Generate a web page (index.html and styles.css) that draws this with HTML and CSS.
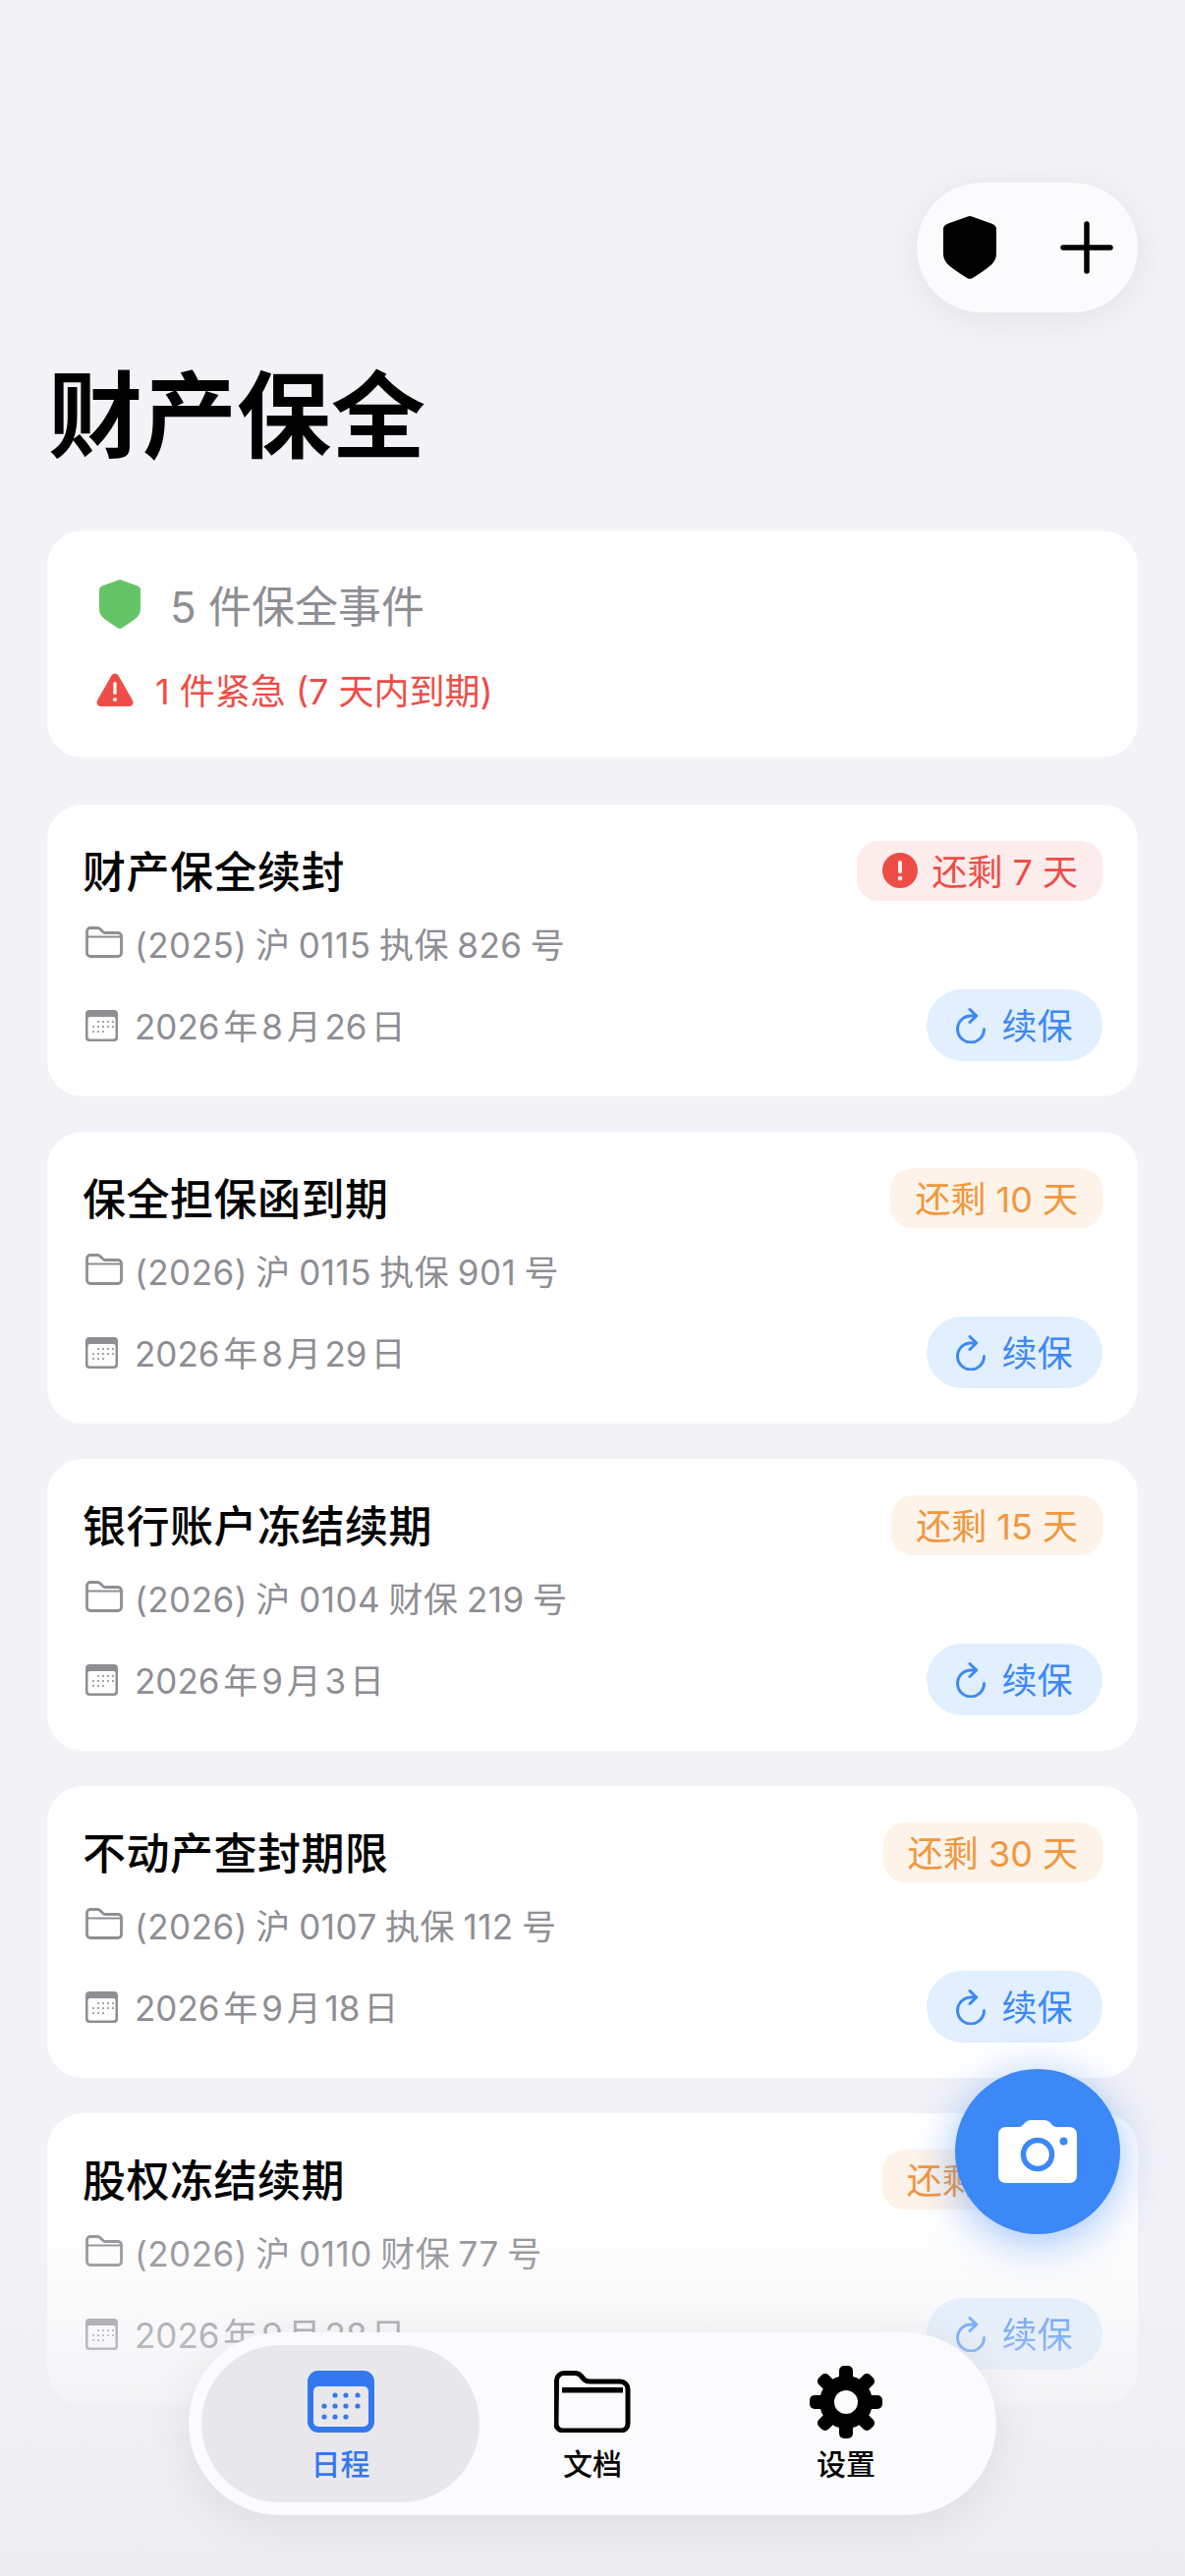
FILE: index.html
```html
<!DOCTYPE html>
<html lang="zh-CN">
<head>
  <meta charset="UTF-8" />
  <title>财产保全</title>
  <link rel="stylesheet" href="styles.css">
</head>
<body>

  <!-- 图标 -->
  <svg class="defs" width="0" height="0">
    <symbol id="shield" viewBox="0 0 54 64">
      <path fill="currentColor" d="M27 0 C28 0 29 .4 30 .8 L49 7.6 C52 8.8 54 10.400 54 13 V38 C54 45 50 49 44 53.500 C39 57 34 60.500 29 63.400 C28 64 26 64 25 63.400 C20 60.500 15 57 10 53.500 C4 49 0 45 0 38 V13 C0 10.400 2 8.800 5 7.600 L24 .8 C25 .4 26 0 27 0 Z"/>
    </symbol>
    <symbol id="folder" viewBox="0 0 38 32">
      <path fill="none" stroke="currentColor" stroke-width="2.800" stroke-linejoin="round" d="M1.500 5 a3.500 3.500 0 0 1 3.500-3.500 h7 c1.500 0 2.300.5 3.300 1.500 l2.200 2.200 c.8.8 1.500 1.300 2.800 1.300 h12.700 a3.500 3.500 0 0 1 3.500 3.500 v17 a3.500 3.500 0 0 1-3.500 3.500 h-28 a3.500 3.500 0 0 1-3.500-3.500 Z"/>
      <path fill="none" stroke="currentColor" stroke-width="2" d="M2 10.500 H36"/>
    </symbol>
    <symbol id="cal-sm" viewBox="0 0 33 32">
      <rect width="33" height="32" rx="4" fill="currentColor"/>
      <rect x="2.500" y="7" width="28" height="22.500" rx="2" fill="#fff"/>
      <g fill="currentColor">
        <circle cx="13" cy="12" r="1.100"/><circle cx="18" cy="12" r="1.100"/><circle cx="23" cy="12" r="1.100"/><circle cx="28" cy="12" r="1.100"/>
        <circle cx="8" cy="17" r="1.100"/><circle cx="13" cy="17" r="1.100"/><circle cx="18" cy="17" r="1.100"/><circle cx="23" cy="17" r="1.100"/><circle cx="28" cy="17" r="1.100"/>
        <circle cx="8" cy="22" r="1.100"/><circle cx="13" cy="22" r="1.100"/><circle cx="18" cy="22" r="1.100"/>
      </g>
    </symbol>
    <symbol id="renew" viewBox="0 0 30 36">
      <path fill="none" stroke="currentColor" stroke-width="3" stroke-linecap="round" stroke-linejoin="round" d="M20.500 8 H15 A13.500 13.500 0 1 0 28.500 21.500 M14 1.500 L20.800 8 L14 14.500"/>
    </symbol>
  </svg>

  <div class="page">
    <div class="top-actions">
      <button class="pill-btn"><svg class="ic-shield"><use href="#shield"/></svg></button>
      <button class="pill-btn">
        <svg class="ic-plus" viewBox="0 0 54 54"><path d="M27 3 V51 M3 27 H51" stroke="currentColor" stroke-width="5.500" stroke-linecap="round"/></svg>
      </button>
    </div>

    <h1 class="title">财产保全</h1>

    <!-- 汇总 -->
    <section class="summary">
      <div class="summary-main">
        <svg class="ic-shield-green"><use href="#shield"/></svg>
        <span>5 件保全事件</span>
      </div>
      <div class="summary-warn">
        <svg class="ic-warn" viewBox="0 0 38 34">
          <path fill="currentColor" d="M15.500 2.500 C17 -.300 21 -.300 22.500 2.500 L37 28 C38.500 31 36.500 34 33.500 34 H4.500 C1.500 34 -.500 31 1 28 Z"/>
          <rect x="17.400" y="9" width="3.200" height="13" rx="1.600" fill="#fff"/>
          <circle cx="19" cy="27" r="2" fill="#fff"/>
        </svg>
        <span>1 件紧急 (7 天内到期)</span>
      </div>
    </section>

    <!-- 事件列表 -->
    <section class="event">
      <div class="event-head">
        <h2>财产保全续封</h2>
        <span class="badge badge-red">
          <svg class="ic-alert" viewBox="0 0 36 36"><circle cx="18" cy="18" r="18" fill="currentColor"/><rect x="16" y="8" width="4" height="13" rx="2" fill="#fdeded"/><circle cx="18" cy="26" r="2.300" fill="#fdeded"/></svg>
          <span>还剩 7 天</span>
        </span>
      </div>
      <div class="event-case"><svg class="ic-folder"><use href="#folder"/></svg><span>(2025) 沪 0115 执保 826 号</span></div>
      <div class="event-foot">
        <div class="event-date"><svg class="ic-cal"><use href="#cal-sm"/></svg><span>2026 年 8 月 26 日</span></div>
        <button class="renew"><svg class="ic-renew"><use href="#renew"/></svg><span>续保</span></button>
      </div>
    </section>

    <section class="event">
      <div class="event-head">
        <h2>保全担保函到期</h2>
        <span class="badge badge-orange"><span>还剩 10 天</span></span>
      </div>
      <div class="event-case"><svg class="ic-folder"><use href="#folder"/></svg><span>(2026) 沪 0115 执保 901 号</span></div>
      <div class="event-foot">
        <div class="event-date"><svg class="ic-cal"><use href="#cal-sm"/></svg><span>2026 年 8 月 29 日</span></div>
        <button class="renew"><svg class="ic-renew"><use href="#renew"/></svg><span>续保</span></button>
      </div>
    </section>

    <section class="event">
      <div class="event-head">
        <h2>银行账户冻结续期</h2>
        <span class="badge badge-orange"><span>还剩 15 天</span></span>
      </div>
      <div class="event-case"><svg class="ic-folder"><use href="#folder"/></svg><span>(2026) 沪 0104 财保 219 号</span></div>
      <div class="event-foot">
        <div class="event-date"><svg class="ic-cal"><use href="#cal-sm"/></svg><span>2026 年 9 月 3 日</span></div>
        <button class="renew"><svg class="ic-renew"><use href="#renew"/></svg><span>续保</span></button>
      </div>
    </section>

    <section class="event">
      <div class="event-head">
        <h2>不动产查封期限</h2>
        <span class="badge badge-orange"><span>还剩 30 天</span></span>
      </div>
      <div class="event-case"><svg class="ic-folder"><use href="#folder"/></svg><span>(2026) 沪 0107 执保 112 号</span></div>
      <div class="event-foot">
        <div class="event-date"><svg class="ic-cal"><use href="#cal-sm"/></svg><span>2026 年 9 月 18 日</span></div>
        <button class="renew"><svg class="ic-renew"><use href="#renew"/></svg><span>续保</span></button>
      </div>
    </section>

    <section class="event">
      <div class="event-head">
        <h2>股权冻结续期</h2>
        <span class="badge badge-orange"><span>还剩 40 天</span></span>
      </div>
      <div class="event-case"><svg class="ic-folder"><use href="#folder"/></svg><span>(2026) 沪 0110 财保 77 号</span></div>
      <div class="event-foot">
        <div class="event-date"><svg class="ic-cal"><use href="#cal-sm"/></svg><span>2026 年 9 月 28 日</span></div>
        <button class="renew"><svg class="ic-renew"><use href="#renew"/></svg><span>续保</span></button>
      </div>
    </section>
  </div>

  <!-- 底部渐隐 -->
  <div class="fade"></div>

  <!-- 拍照按钮 -->
  <button class="fab">
    <svg class="ic-camera" viewBox="0 0 80 64">
      <path fill="#fff" d="M8 7 H20 C23 7 24 6 26 4 C28 1.500 30 0 34 0 H46 C50 0 52 1.500 54 4 C56 6 57 7 60 7 H72 C77 7 80 10 80 15 V56 C80 61 77 64 72 64 H8 C3 64 0 61 0 56 V15 C0 10 3 7 8 7 Z"/>
      <circle cx="40" cy="35" r="14.500" fill="none" stroke="#3d88f7" stroke-width="5.500"/>
      <circle cx="66.500" cy="21.500" r="4" fill="#3d88f7"/>
    </svg>
  </button>

  <!-- 底部导航 -->
  <nav class="tabbar">
    <div class="tab tab-active">
      <svg class="tab-cal" viewBox="0 0 68 63">
        <rect width="68" height="63" rx="11" fill="currentColor"/>
        <rect x="6" y="16" width="56" height="41" rx="5" fill="#e8e8ec"/>
        <g fill="currentColor">
          <circle cx="28" cy="25" r="2.600"/><circle cx="39" cy="25" r="2.600"/><circle cx="51" cy="25" r="2.600"/>
          <circle cx="17" cy="36" r="2.600"/><circle cx="28" cy="36" r="2.600"/><circle cx="39" cy="36" r="2.600"/><circle cx="51" cy="36" r="2.600"/>
          <circle cx="17" cy="47" r="2.600"/><circle cx="28" cy="47" r="2.600"/><circle cx="39" cy="47" r="2.600"/>
        </g>
      </svg>
      <span>日程</span>
    </div>
    <div class="tab">
      <svg class="tab-folder" viewBox="0 0 78 63">
        <path fill="none" stroke="currentColor" stroke-width="5" stroke-linejoin="round" d="M2.500 10 a7.500 7.500 0 0 1 7.500-7.500 h11 c3 0 4.500 1 6 2.500 l3 3.500 c1.500 1.500 3 2.500 6 2.500 h31 a8 8 0 0 1 8 8 v35 a7 7 0 0 1-7 7 h-59 a7 7 0 0 1-7-7 Z"/>
        <rect x="8" y="17" width="62" height="5.500" fill="currentColor"/>
      </svg>
      <span>文档</span>
    </div>
    <div class="tab">
      <svg class="tab-gear" viewBox="0 0 74 74">
        <g fill="currentColor">
          <rect x="30" y="0" width="14" height="74" rx="5"/>
          <rect x="30" y="0" width="14" height="74" rx="5" transform="rotate(45 37 37)"/>
          <rect x="30" y="0" width="14" height="74" rx="5" transform="rotate(90 37 37)"/>
          <rect x="30" y="0" width="14" height="74" rx="5" transform="rotate(135 37 37)"/>
          <circle cx="37" cy="37" r="27"/>
        </g>
        <circle cx="37" cy="37" r="12" fill="#fbfbfe"/>
      </svg>
      <span>设置</span>
    </div>
  </nav>

</body>
</html>
```

FILE: styles.css
```css
* {
  box-sizing: border-box;
  margin: 0;
  padding: 0;
  font-family: 'Inter', 'Noto Sans CJK SC', sans-serif;
}

html, body {
  height: 2622px;
  overflow: hidden;
}

body {
  position: relative;
  background: #f2f2f7;
  color: #000;
}

button {
  border: none;
  background: none;
  cursor: pointer;
}

.defs {
  position: absolute;
}

.page {
  padding: 186px 48px 0;
}

/* 顶部按钮 */
.top-actions {
  display: flex;
  align-items: center;
  justify-content: space-between;
  width: 225px;
  height: 132px;
  margin-left: auto;
  padding: 0 25px 0 27px;
  background: #fbfbfd;
  border-radius: 66px;
  box-shadow: 0 6px 40px rgba(0, 0, 0, 0.07);
}

.pill-btn {
  display: flex;
  color: #000;
}

.ic-shield {
  width: 54px;
  height: 64px;
}

.ic-plus {
  width: 54px;
  height: 54px;
}

.title {
  margin: 39px 0 0 1px;
  font-size: 96px;
  line-height: 132px;
  font-weight: 700;
}

/* 汇总 */
.summary {
  height: 231px;
  margin-top: 51px;
  padding: 47px 50px 0;
  background: #fff;
  border-radius: 36px;
}

.summary-main {
  display: flex;
  align-items: center;
  gap: 30px;
  height: 56px;
  font-size: 44px;
  color: #8e8e93;
}

.ic-shield-green {
  width: 42px;
  height: 52px;
  margin-left: 3px;
  color: #65c466;
}

.summary-warn {
  display: flex;
  align-items: center;
  gap: 22px;
  height: 40px;
  margin-top: 39px;
  font-size: 36px;
  color: #ee4d47;
}

.summary-warn span {
  padding-bottom: 3px;
}

.ic-warn {
  width: 38px;
  height: 34px;
}

/* 事件卡片 */
.event {
  height: 297px;
  margin-top: 36px;
  padding: 36px 36px 0;
  background: #fff;
  border-radius: 36px;
}

.summary + .event {
  margin-top: 48px;
}

.event-head {
  display: flex;
  align-items: center;
  justify-content: space-between;
  height: 62px;
}

.event-head h2 {
  padding-bottom: 3px;
  font-size: 44px;
  font-weight: 500;
  letter-spacing: 0.5px;
}

.badge {
  display: flex;
  align-items: center;
  gap: 14px;
  height: 61px;
  padding: 0 25px;
  border-radius: 22px;
  font-size: 36px;
}

.badge span {
  padding-bottom: 3px;
}

.badge-red {
  padding-left: 26px;
  background: #fdecec;
  color: #ee4d47;
}

.badge-orange {
  background: #fdf3e9;
  color: #f0973f;
}

.ic-alert {
  width: 36px;
  height: 36px;
}

.event-case,
.event-date {
  display: flex;
  align-items: center;
  gap: 12px;
  font-size: 35px;
  color: #8e8e93;
}

.event-case {
  height: 50px;
  margin-top: 17px;
  padding-left: 3px;
  word-spacing: -2px;
  letter-spacing: 0.5px;
}

.ic-folder {
  width: 38px;
  height: 32px;
  flex-shrink: 0;
}

.event-foot {
  display: flex;
  align-items: center;
  justify-content: space-between;
  height: 73px;
  margin-top: 23px;
}

.event-date {
  padding-left: 3px;
  gap: 17px;
  word-spacing: -6px;
}

.event-date span {
  padding-bottom: 3px;
}

.ic-cal {
  width: 33px;
  height: 32px;
  flex-shrink: 0;
}

.renew {
  display: flex;
  align-items: center;
  justify-content: center;
  gap: 16px;
  width: 179px;
  height: 73px;
  background: #e1effe;
  border-radius: 37px;
  color: #3d88f7;
  font-size: 36px;
}

.renew span {
  padding-bottom: 3px;
}

.ic-renew {
  width: 30px;
  height: 36px;
}

/* 底部渐隐 */
.fade {
  position: absolute;
  left: 0;
  right: 0;
  bottom: 0;
  height: 372px;
  background: linear-gradient(to bottom, rgba(238, 238, 243, 0) 0%, rgba(238, 238, 243, 0.55) 45%, rgba(236, 236, 241, 0.95) 100%);
}

/* 拍照按钮 */
.fab {
  position: absolute;
  left: 972px;
  top: 2106px;
  display: flex;
  align-items: center;
  justify-content: center;
  width: 168px;
  height: 168px;
  background: #3d88f7;
  border-radius: 50%;
  box-shadow: 0 8px 44px rgba(61, 136, 247, 0.5);
}

.ic-camera {
  width: 80px;
  height: 64px;
}

/* 底部导航 */
.tabbar {
  position: absolute;
  left: 192px;
  top: 2374px;
  display: flex;
  width: 822px;
  height: 186px;
  padding: 13px;
  background: #fbfbfe;
  border-radius: 93px;
  box-shadow: 0 8px 50px rgba(0, 0, 0, 0.08);
}

.tab {
  flex: none;
  width: 258px;
  display: flex;
  flex-direction: column;
  align-items: center;
  justify-content: flex-end;
  padding-bottom: 19px;
  font-size: 30px;
  font-weight: 500;
}

.tab svg {
  display: block;
  margin-bottom: 8px;
}

.tab-active {
  width: 283px;
  margin-right: -14px;
  background: #e8e8ec;
  border-radius: 80px;
  color: #3478f0;
}

.tab-cal {
  width: 68px;
  height: 63px;
}

.tab-folder {
  width: 78px;
  height: 63px;
}

.tab svg.tab-gear {
  width: 74px;
  height: 74px;
  margin-bottom: 2px;
}
```
